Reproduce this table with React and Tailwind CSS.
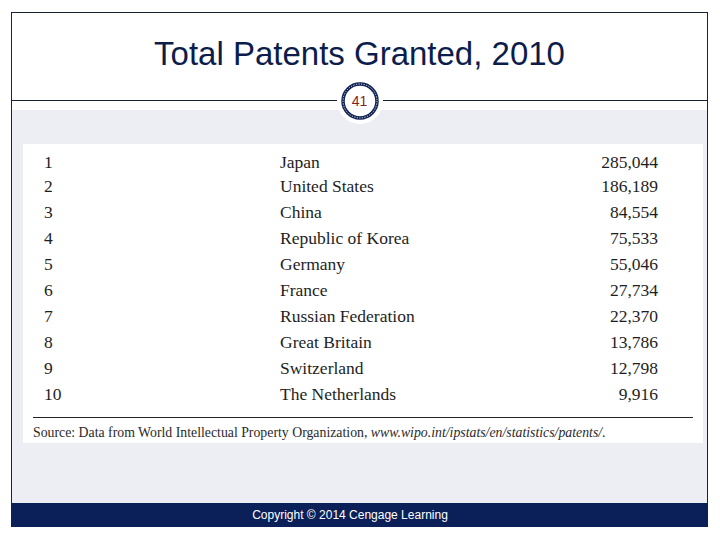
import React from 'react';

const rows = [
    ['1', 'Japan', '285,044'],
    ['2', 'United States', '186,189'],
    ['3', 'China', '84,554'],
    ['4', 'Republic of Korea', '75,533'],
    ['5', 'Germany', '55,046'],
    ['6', 'France', '27,734'],
    ['7', 'Russian Federation', '22,370'],
    ['8', 'Great Britain', '13,786'],
    ['9', 'Switzerland', '12,798'],
    ['10', 'The Netherlands', '9,916'],
];

function SlideBadge() {
    return (
        <div className="absolute left-1/2 top-[88px] -translate-x-1/2 -translate-y-1/2 flex h-[46px] w-[46px] items-center justify-center rounded-full bg-white">
            <svg width="40" height="40" viewBox="0 0 40 40" className="absolute">
                <circle cx="20" cy="20" r="17" fill="white" stroke="#0f2152" strokeWidth="3.5" />
                <circle cx="20" cy="20" r="17" fill="none" stroke="white" strokeWidth="0.9" strokeDasharray="1.2 1.4" />
            </svg>
            <span className="relative text-[14px] leading-none text-[#8b1c1c] font-['Liberation_Sans',Arial,sans-serif]">41</span>
        </div>
    );
}

export default function App() {
    return (
        <div className="w-[720px] h-[540px] bg-white pt-[12px] pl-[11px] font-['Liberation_Sans',Arial,sans-serif]">
            <div className="relative flex h-[491px] w-[697px] flex-col border-x border-t border-[#1a2238]">
                <div className="flex h-[88px] items-start justify-center border-b border-[#1a2238] pt-[24px]">
                    <h1 className="text-[33px] leading-none text-[#0d1d4b]">Total Patents Granted, 2010</h1>
                </div>
                <div className="flex-1 bg-white pt-[9px]">
                    <div className="h-full bg-[#eceef3] pl-[11px] pr-[4px] pt-[34px]">
                        <div className="h-[299px] bg-white pt-[7px] font-['Liberation_Serif','Times_New_Roman',serif] text-[#1e1e1e]">
                            {rows.map(([rank, country, count], i) => (
                                <div
                                    key={rank}
                                    className={`flex items-center text-[17.5px] leading-none ${i === 0 ? 'h-[23px]' : 'h-[26px]'}`}
                                >
                                    <span className="w-[257px] pl-[21px]">{rank}</span>
                                    <span className="flex-1">{country}</span>
                                    <span className="pr-[45px]">{count}</span>
                                </div>
                            ))}
                            <div className="mx-[10px] mt-[9px] border-t border-[#222]" />
                            <p className="ml-[10px] mt-[6px] text-[13.8px] leading-[17px] text-[#2a2a2a]">
                                Source: Data from World Intellectual Property Organization,{' '}
                                <em>www.wipo.int/ipstats/en/statistics/patents/</em>.
                            </p>
                        </div>
                    </div>
                </div>
                <SlideBadge />
            </div>
            <div className="flex h-[24px] w-[697px] items-center justify-center bg-[#0b2058] pr-[19px]">
                <span className="text-[12px] text-white">Copyright © 2014 Cengage Learning</span>
            </div>
        </div>
    );
}
